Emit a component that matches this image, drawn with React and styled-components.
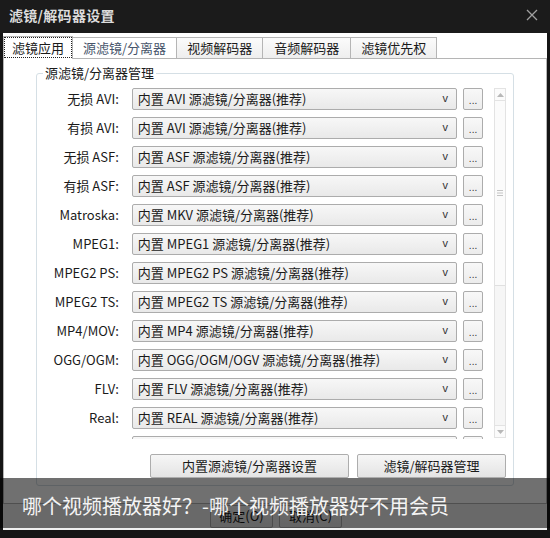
import React from "react";
import styled, { createGlobalStyle } from "styled-components";

const GlobalStyle = createGlobalStyle`
  html, body {
    margin: 0;
    padding: 0;
    background: #000;
  }
  body {
    font-family: "Noto Sans CJK SC", "Noto Sans", "Liberation Sans", sans-serif;
  }
`;

const Window = styled.div`
  position: relative;
  width: 550px;
  height: 538px;
  background: #151515;
  display: flex;
  flex-direction: column;
  overflow: hidden;
`;

const TitleBar = styled.div`
  height: 33px;
  box-sizing: border-box;
  flex: none;
  display: flex;
  align-items: center;
  justify-content: space-between;
  padding: 0 12px 3px 9px;
  background: #1b1b1b;
`;

const Title = styled.div`
  color: #dcdcdc;
  font-size: 14px;
  font-weight: 700;
  letter-spacing: 0.3px;
`;

const Client = styled.div`
  flex: 1;
  display: flex;
  flex-direction: column;
  margin: 0 3px 8px;
  background: #f0f0f0;
`;

const TabStrip = styled.div`
  height: 25px;
  flex: none;
  display: flex;
  align-items: flex-end;
  padding: 0 0 0 1px;
  background: #fff;
  position: relative;
  z-index: 1;
`;

const Tab = styled.div`
  height: ${(p) => (p.$active ? 23 : 21)}px;
  box-sizing: border-box;
  padding: 0 ${(p) => p.$pad}px 2px;
  display: flex;
  align-items: center;
  font-size: 13px;
  color: ${(p) => (p.$hover ? "#47556b" : "#1a1a1a")};
  border: 1px solid #b5b5b5;
  border-bottom: none;
  margin-left: -1px;
  margin-bottom: ${(p) => (p.$active ? -1 : 0)}px;
  background: ${(p) =>
    p.$active || p.$hover ? "#fff" : "linear-gradient(#fbfbfb, #eeeeee)"};
  outline: ${(p) => (p.$active ? "1px dotted #222" : "none")};
  outline-offset: -2px;
`;

const TabPanel = styled.div`
  height: 446px;
  box-sizing: border-box;
  flex: none;
  background: #fff;
  border: 1px solid #b5b5b5;
  padding: 14px 32px 17px 32px;
`;

const GroupBox = styled.div`
  border: 1px solid #d5dfe5;
  border-radius: 3px;
  padding: 0 7px 7px 1px;
  display: flex;
  flex-direction: column;
`;

const Legend = styled.div`
  align-self: flex-start;
  height: 16px;
  line-height: 15px;
  margin: -9px 0 7px 5px;
  padding: 0 2px;
  background: #fff;
  font-size: 13px;
  color: #1a1a1a;
`;

const ListArea = styled.div`
  display: flex;
  align-items: flex-start;
`;

const RowsClip = styled.div`
  height: 351px;
  overflow: hidden;
  display: flex;
  flex-direction: column;
  gap: 7px;
`;

const Row = styled.div`
  display: flex;
  align-items: center;
  height: 22px;
  flex: none;
`;

const Label = styled.div`
  width: 80px;
  margin-left: 1px;
  margin-right: 13px;
  padding-bottom: 2px;
  text-align: right;
  font-size: 13px;
  color: #1a1a1a;
  white-space: nowrap;
`;

const Combo = styled.div`
  width: 326px;
  height: 22px;
  box-sizing: border-box;
  border: 1px solid #acacac;
  border-radius: 2px;
  background: linear-gradient(#f7f7f7, #e9e9e9);
  display: flex;
  align-items: center;
  justify-content: space-between;
  padding: 0 8px 2px 5px;
  font-size: 13px;
  color: #1a1a1a;
  white-space: nowrap;
`;

const Arrow = styled.span`
  font-family: "Liberation Sans", sans-serif;
  font-size: 11px;
  color: #333;
`;

const MoreButton = styled.div`
  width: 20px;
  height: 22px;
  margin-left: 6px;
  box-sizing: border-box;
  border: 1px solid #acacac;
  border-radius: 2px;
  background: linear-gradient(#f8f8f8, #ececec);
  display: flex;
  align-items: center;
  justify-content: center;
  font-family: "Liberation Sans", sans-serif;
  font-size: 10px;
  color: #333;
  padding-top: 2px;
`;

const ScrollBar = styled.div`
  width: 12px;
  height: 350px;
  margin-left: 11px;
  box-sizing: border-box;
  border: 1px solid #e3e3e3;
  background: #f6f6f6;
  display: flex;
  flex-direction: column;
`;

const ScrollArrow = styled.div`
  height: 11px;
  flex: none;
  display: flex;
  align-items: center;
  justify-content: center;
  border-${(p) => (p.$down ? "top" : "bottom")}: 1px solid #e3e3e3;
  background: #fbfbfb;
`;

const Thumb = styled.div`
  height: 185px;
  flex: none;
  box-sizing: border-box;
  border-bottom: 1px solid #e0e0e0;
  background: #fbfbfb;
  display: flex;
  align-items: center;
  justify-content: center;
`;

const Track = styled.div`
  flex: 1;
`;

const ButtonRow = styled.div`
  display: flex;
  justify-content: flex-end;
  gap: 8px;
  margin-top: 15px;
`;

const PushButton = styled.div`
  width: ${(p) => p.$w}px;
  height: ${(p) => p.$h || 24}px;
  box-sizing: border-box;
  border: 1px solid #adadad;
  border-radius: 2px;
  background: linear-gradient(#f6f6f6, #e4e4e4);
  display: flex;
  align-items: center;
  justify-content: center;
  padding-bottom: 2px;
  font-size: 13px;
  color: #1a1a1a;
  white-space: nowrap;
`;

const BottomBar = styled.div`
  flex: 1;
  display: flex;
  justify-content: center;
  align-items: flex-start;
  gap: 6px;
  padding: 1px 0 0 2px;
`;

const Caption = styled.div`
  position: absolute;
  left: 0;
  top: 478px;
  width: 100%;
  height: 50px;
  box-sizing: border-box;
  padding: 4px 0 0 22px;
  display: flex;
  align-items: center;
  background: rgba(0, 0, 0, 0.56);
  color: #f4f4f4;
  font-size: 20px;
  white-space: nowrap;
`;

const tabs = [
  { label: "滤镜应用", pad: 8, active: true },
  { label: "源滤镜/分离器", pad: 10, hover: true },
  { label: "视频解码器", pad: 10 },
  { label: "音频解码器", pad: 11 },
  { label: "滤镜优先权", pad: 10 },
];

const rows = [
  ["无损 AVI:", "内置 AVI 源滤镜/分离器(推荐)"],
  ["有损 AVI:", "内置 AVI 源滤镜/分离器(推荐)"],
  ["无损 ASF:", "内置 ASF 源滤镜/分离器(推荐)"],
  ["有损 ASF:", "内置 ASF 源滤镜/分离器(推荐)"],
  ["Matroska:", "内置 MKV 源滤镜/分离器(推荐)"],
  ["MPEG1:", "内置 MPEG1 源滤镜/分离器(推荐)"],
  ["MPEG2 PS:", "内置 MPEG2 PS 源滤镜/分离器(推荐)"],
  ["MPEG2 TS:", "内置 MPEG2 TS 源滤镜/分离器(推荐)"],
  ["MP4/MOV:", "内置 MP4 源滤镜/分离器(推荐)"],
  ["OGG/OGM:", "内置 OGG/OGM/OGV 源滤镜/分离器(推荐)"],
  ["FLV:", "内置 FLV 源滤镜/分离器(推荐)"],
  ["Real:", "内置 REAL 源滤镜/分离器(推荐)"],
  ["", ""],
];

function CloseIcon() {
  return (
    <svg width="12" height="12" viewBox="0 0 12 12">
      <path d="M1 1 L11 11 M11 1 L1 11" stroke="#a0a0a0" strokeWidth="1.3" />
    </svg>
  );
}

function Tri({ down }) {
  return (
    <svg width="7" height="4" viewBox="0 0 7 4">
      <path d={down ? "M0 0 L7 0 L3.5 4 Z" : "M0 4 L7 4 L3.5 0 Z"} fill="#b8b8b8" />
    </svg>
  );
}

function Grip() {
  return (
    <svg width="6" height="6" viewBox="0 0 6 6">
      <path d="M0 0.5 H6 M0 3 H6 M0 5.5 H6" stroke="#c4c4c4" strokeWidth="1" />
    </svg>
  );
}

export default function App() {
  return (
    <>
      <GlobalStyle />
      <Window>
        <TitleBar>
          <Title>滤镜/解码器设置</Title>
          <CloseIcon />
        </TitleBar>
        <Client>
          <TabStrip>
            {tabs.map((t) => (
              <Tab key={t.label} $pad={t.pad} $active={t.active} $hover={t.hover}>
                {t.label}
              </Tab>
            ))}
          </TabStrip>
          <TabPanel>
            <GroupBox>
              <Legend>源滤镜/分离器管理</Legend>
              <ListArea>
                <RowsClip>
                  {rows.map(([label, value], i) => (
                    <Row key={i}>
                      <Label>{label}</Label>
                      <Combo>
                        <span>{value}</span>
                        {value && <Arrow>v</Arrow>}
                      </Combo>
                      <MoreButton>{value ? "..." : ""}</MoreButton>
                    </Row>
                  ))}
                </RowsClip>
                <ScrollBar>
                  <ScrollArrow>
                    <Tri />
                  </ScrollArrow>
                  <Thumb>
                    <Grip />
                  </Thumb>
                  <Track />
                  <ScrollArrow $down>
                    <Tri down />
                  </ScrollArrow>
                </ScrollBar>
              </ListArea>
              <ButtonRow>
                <PushButton $w={199}>内置源滤镜/分离器设置</PushButton>
                <PushButton $w={149}>滤镜/解码器管理</PushButton>
              </ButtonRow>
            </GroupBox>
          </TabPanel>
          <BottomBar>
            <PushButton $w={63} $h={23}>确定(O)</PushButton>
            <PushButton $w={63} $h={23}>取消(C)</PushButton>
          </BottomBar>
        </Client>
        <Caption>哪个视频播放器好？-哪个视频播放器好不用会员</Caption>
      </Window>
    </>
  );
}
